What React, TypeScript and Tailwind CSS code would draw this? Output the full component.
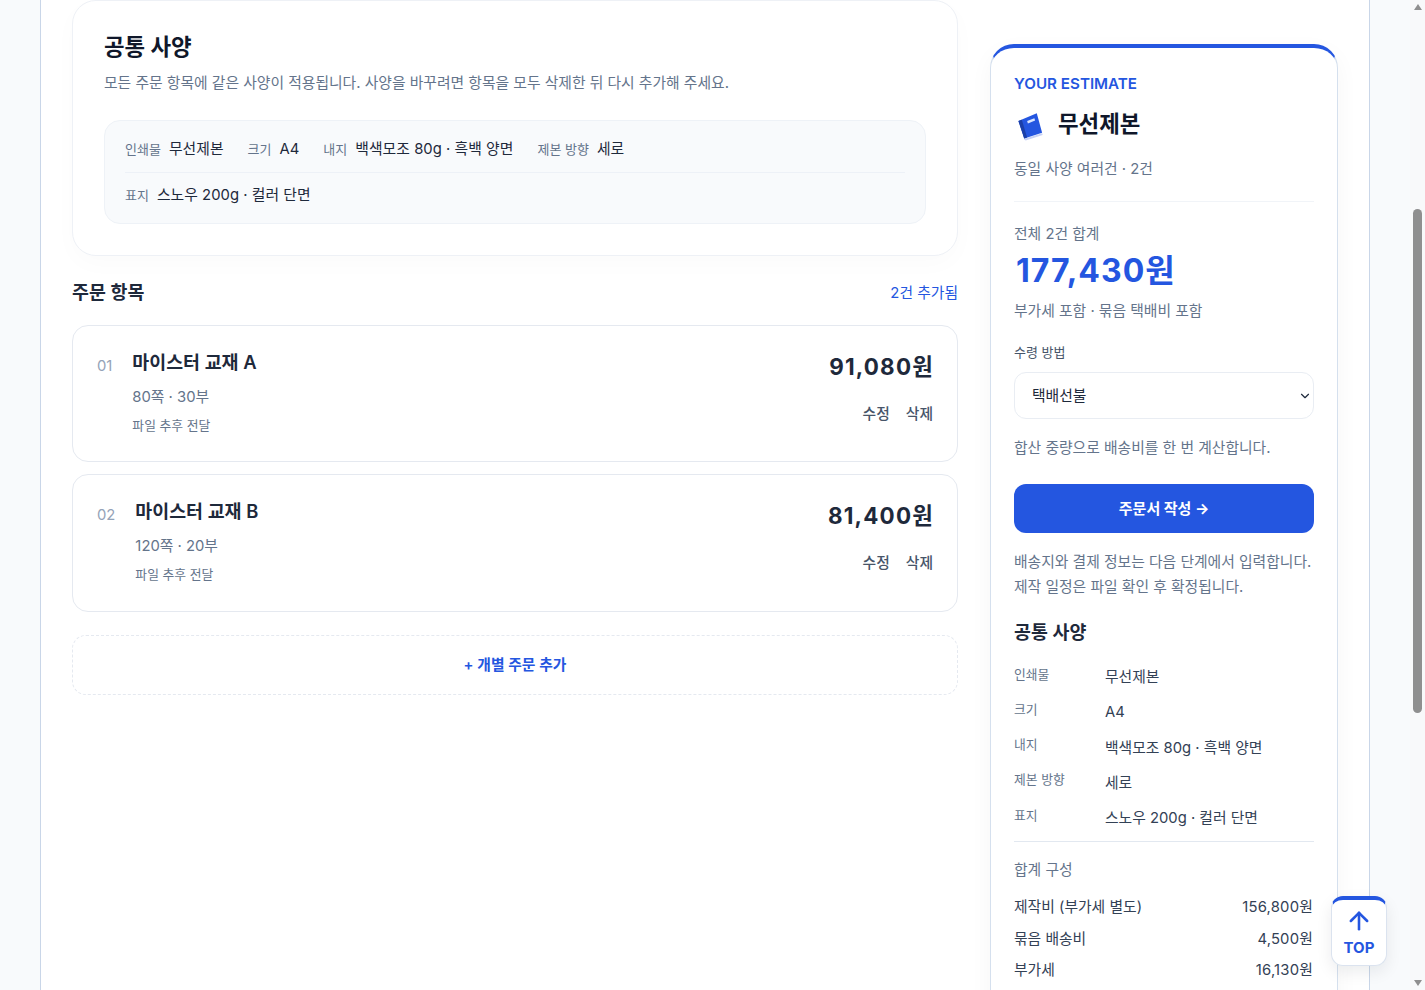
import { ArrowUp, ChevronDown } from "lucide-react";

const specs = [
  { label: "인쇄물", value: "무선제본" },
  { label: "크기", value: "A4" },
  { label: "내지", value: "백색모조 80g · 흑백 양면" },
  { label: "제본 방향", value: "세로" },
];

const orders = [
  { no: "01", name: "마이스터 교재 A", meta: "80쪽 · 30부", price: "91,080원", h: "h-[137px]" },
  { no: "02", name: "마이스터 교재 B", meta: "120쪽 · 20부", price: "81,400원", h: "h-[138px]" },
];

const summarySpecs = [
  ...specs,
  { label: "표지", value: "스노우 200g · 컬러 단면" },
];

const costs = [
  { label: "제작비 (부가세 별도)", value: "156,800원" },
  { label: "묶음 배송비", value: "4,500원" },
  { label: "부가세", value: "16,130원" },
];

function BookIcon() {
  return (
    <svg width="29" height="30" viewBox="0 -2.5 30 30" className="shrink-0 overflow-visible">
      <path d="M8 28 27 22 27.6 24 10 29.6Z" fill="#c7d2f5" />
      <path d="M2.5 9.5 21.5 1.5 27 21.5 8.5 27.5Z" fill="#2456e0" />
      <path d="M2.5 9.5 6 8 11.5 26.5 8.5 27.5Z" fill="#1b3fa8" />
      <path d="M11.5 9.5 19 6.5 19.8 9 12.3 12Z" fill="#dbe6ff" />
    </svg>
  );
}

function OrderCard({ no, name, meta, price, h }: (typeof orders)[number]) {
  return (
    <div className={`flex ${h} justify-between rounded-2xl border border-[#e5e9f0] bg-white px-6 pt-[22px]`}>
      <div className="flex items-start gap-5">
        <span className="mt-[8px] text-[14.8px] leading-[20px] text-[#94a3b8]">{no}</span>
        <div>
          <div className="text-[18.4px] leading-[28px] font-semibold text-[#1e293b]">{name}</div>
          <div className="mt-[10px] text-[14.8px] leading-[22px] text-[#64748b]">{meta}</div>
          <div className="mt-[9px] text-[12.8px] leading-[18px] text-[#64748b]">파일 추후 전달</div>
        </div>
      </div>
      <div className="flex flex-col items-end">
        <div className="mt-[3px] mr-[-1px] text-[22.4px] leading-[32px] font-bold tracking-[1.2px] text-[#1e293b]">{price}</div>
        <div className="mt-[21px] flex gap-4 text-[14.8px] leading-[20px] font-medium text-[#475569]">
          <span>수정</span>
          <span>삭제</span>
        </div>
      </div>
    </div>
  );
}

export default function App() {
  return (
    <div className="relative flex h-[990px] overflow-hidden bg-[#f8fafc] font-[Inter,'Noto_Sans_CJK_KR',sans-serif] text-[#1e293b]">
      <div className="flex flex-1 justify-center">
        <div className="flex w-[1330px] gap-8 self-start border-x border-[#c9d6e8] bg-white px-[31px]">
          <main className="w-[886px] shrink-0">
            <section className="h-[256px] rounded-[24px] border border-[#eef1f6] bg-white px-[31px] pt-[30px] shadow-[0_8px_24px_rgba(15,23,42,0.02)]">
              <h2 className="text-[22.4px] leading-[32px] font-bold text-[#0f172a]">공통 사양</h2>
              <p className="mt-[8px] text-[14.8px] leading-[24px] text-[#64748b]">
                모든 주문 항목에 같은 사양이 적용됩니다. 사양을 바꾸려면 항목을 모두 삭제한 뒤 다시 추가해 주세요.
              </p>
              <div className="mt-[25px] h-[104px] rounded-2xl border border-[#eef2f7] bg-[#f8fafc] px-5">
                <div className="flex h-[52px] items-center gap-6 border-b border-[#edf1f7] pt-[6px]">
                  {specs.map((s) => (
                    <div key={s.label} className="flex items-center gap-2">
                      <span className="text-[13px] text-[#64748b]">{s.label}</span>
                      <span className="text-[14.8px] tracking-[0.05px] text-[#1e293b]">{s.value}</span>
                    </div>
                  ))}
                </div>
                <div className="flex h-[45px] items-center gap-2">
                  <span className="text-[13px] text-[#64748b]">표지</span>
                  <span className="text-[14.8px] tracking-[0.05px] text-[#1e293b]">스노우 200g · 컬러 단면</span>
                </div>
              </div>
            </section>

            <div className="mt-[23px] flex h-[28px] items-center justify-between">
              <h3 className="text-[18.4px] font-semibold text-[#1e293b]">주문 항목</h3>
              <span className="text-[14.8px] text-[#2456e0]">2건 추가됨</span>
            </div>

            <div className="mt-[18px] flex flex-col gap-3">
              {orders.map((o) => (
                <OrderCard key={o.no} {...o} />
              ))}
            </div>

            <button className="mt-[23px] h-[60px] w-full rounded-[14px] border border-dashed border-[#e5e9f0] bg-white text-[14.8px] font-semibold text-[#2456e0]">
              + 개별 주문 추가
            </button>
          </main>

          <aside className="mt-[44px] h-[1100px] w-[348px] shrink-0 rounded-[24px] border border-t-4 border-[#d5e0ee] border-t-[#2456e0] bg-white pt-[24px] pr-6 pl-[23px] shadow-[0_8px_24px_rgba(15,23,42,0.04)]">
            <div className="text-[15.2px] leading-[24px] font-semibold text-[#2456e0]">YOUR ESTIMATE</div>
            <div className="mt-[12px] flex h-[32px] items-center gap-[13px] pl-[2px]">
              <BookIcon />
              <h2 className="text-[22.4px] font-bold text-[#0f172a]">무선제본</h2>
            </div>
            <div className="mt-[17px] text-[14.8px] leading-[24px] text-[#64748b]">동일 사양 여러건 · 2건</div>
            <div className="mt-[20px] w-[300px] border-t border-[#f1f4f8]" />
            <div className="mt-[21px] text-[14.8px] leading-[22px] text-[#64748b]">전체 2건 합계</div>
            <div className="mt-[4px] pl-[2px] text-[32px] leading-[44px] font-bold tracking-[1px] text-[#2456e0]">177,430원</div>
            <div className="mt-[6px] text-[14.8px] leading-[24px] text-[#64748b]">부가세 포함 · 묶음 택배비 포함</div>
            <div className="mt-[19px] text-[13px] leading-[20px] text-[#475569]">수령 방법</div>
            <div className="relative mt-[10px] w-[300px]">
              <select className="h-[47px] w-full appearance-none rounded-xl border border-[#e9edf3] bg-white pt-[1px] pl-[17px] text-[14.8px] text-[#1e293b]">
                <option>택배선불</option>
              </select>
              <ChevronDown size={14} strokeWidth={2} className="absolute top-[17px] right-[2px] text-[#1e293b]" />
            </div>
            <div className="mt-[17px] text-[14.8px] leading-[24px] text-[#64748b]">합산 중량으로 배송비를 한 번 계산합니다.</div>
            <button className="mt-[24px] h-[49px] w-[300px] rounded-xl bg-[#2456e0] pt-[1px] text-[15px] font-bold text-white">
              주문서 작성 →
            </button>
            <p className="mt-[17px] w-[300px] text-[14.8px] leading-[25px] text-[#64748b]">
              배송지와 결제 정보는 다음 단계에서 입력합니다.
              <br />
              제작 일정은 파일 확인 후 확정됩니다.
            </p>
            <h3 className="mt-[18px] text-[18.4px] leading-[28px] font-semibold text-[#1e293b]">공통 사양</h3>
            <dl className="mt-[12px] w-[300px]">
              {summarySpecs.map((s) => (
                <div key={s.label} className="flex h-[35.3px] items-center">
                  <dt className="mb-[3px] w-[91px] text-[12.8px] text-[#64748b]">{s.label}</dt>
                  <dd className="mt-[3px] text-[14.8px] text-[#334155]">{s.value}</dd>
                </div>
              ))}
            </dl>
            <div className="mt-[7px] w-[300px] border-t border-[#e2e8f0]" />
            <div className="mt-[17px] text-[14.8px] leading-[22px] text-[#64748b]">합계 구성</div>
            <div className="mt-[10px] w-[299px]">
              {costs.map((c) => (
                <div key={c.label} className="flex h-[31.5px] items-center justify-between text-[14.8px] text-[#334155]">
                  <span>{c.label}</span>
                  <span className="tracking-[0.2px]">{c.value}</span>
                </div>
              ))}
            </div>
          </aside>
        </div>
      </div>

      {/* browser scrollbar */}
      <div className="relative w-[15px] shrink-0 bg-[#f8f9fa]">
        <div className="absolute top-[209px] left-[3px] h-[504px] w-[9px] rounded-full bg-[#8f8f8f]" />
        <div className="absolute right-[3px] bottom-[4px] h-0 w-0 border-x-[4px] border-t-[6px] border-x-transparent border-t-[#8f8f8f]" />
        <div className="absolute top-[4px] right-[3px] h-0 w-0 border-x-[4px] border-b-[6px] border-x-transparent border-b-[#8f8f8f]" />
      </div>

      <button className="absolute top-[896px] left-[1331px] flex h-[70px] w-[56px] flex-col items-center rounded-xl border border-t-4 border-[#dbe3ef] border-t-[#2456e0] bg-white pt-[7px] text-[#2456e0] shadow-[0_6px_16px_rgba(15,23,42,0.08)]">
        <ArrowUp size={28} strokeWidth={2.2} />
        <span className="mt-[3px] text-[15px] leading-[20px] font-bold">TOP</span>
      </button>
    </div>
  );
}
